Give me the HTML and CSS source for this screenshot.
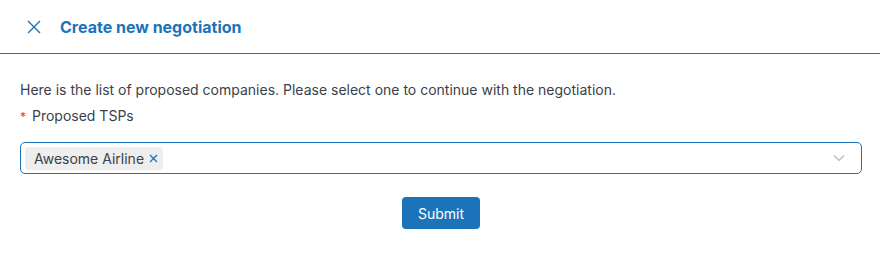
FILE: index.html
```html
<!DOCTYPE html>
<html>
<head>
<meta charset="utf-8">
<link rel="stylesheet" href="styles.css">
</head>
<body>
<div class="header">
  <svg class="close" width="14" height="14" viewBox="0 0 14 14"><path d="M1 1 L13 13 M13 1 L1 13" stroke="#1b74ba" stroke-width="1.4" fill="none"/></svg>
  <h1 class="title">Create new negotiation</h1>
</div>
<div class="content">
  <p class="desc">Here is the list of proposed companies. Please select one to continue with the negotiation.</p>
  <div class="label"><span class="req">*</span> Proposed TSPs</div>
  <div class="select">
    <span class="tag">Awesome Airline <svg class="tag-x" width="9" height="9" viewBox="0 0 9 9"><path d="M1 1 L8 8 M8 1 L1 8" stroke="#1b74ba" stroke-width="1.3" fill="none"/></svg></span>
    <svg class="chev" width="12" height="8" viewBox="0 0 12 8"><path d="M1 1.5 L6 6.5 L11 1.5" stroke="#b9b4bb" stroke-width="1.2" fill="none"/></svg>
  </div>
  <div class="actions"><button class="submit">Submit</button></div>
</div>
</body>
</html>
```
FILE: styles.css
```css
* { box-sizing: border-box; }
body { margin: 0; font-family: Inter, "Noto Sans", sans-serif; color: #3b3f4a; background: #fff; }
.header { height: 54px; border-bottom: 1px solid #1b74ba; display: flex; align-items: center; padding-left: 27px; }
.close { display: block; margin-right: 19px; }
.title { margin: 0; font-size: 16px; font-weight: 700; color: #1b74ba; line-height: 20px; }
.content { padding: 26px 18px 0 20px; }
.desc { margin: 0; font-size: 14px; line-height: 20px; }
.label { margin-top: 6px; font-size: 14px; line-height: 20px; }
.req { color: #d9363e; font-size: 12px; margin-right: 2px; }
.select { margin-top: 15px; height: 32px; border: 1px solid #1b74ba; border-radius: 5px; display: flex; align-items: center; padding: 0 16px 0 4px; justify-content: space-between; }
.tag { background: #eeeeef; border-radius: 4px; height: 23px; display: inline-flex; align-items: center; padding: 0 5px 0 9px; font-size: 14px; color: #3b3f4a; }
.tag-x { margin-left: 5px; display: block; }
.chev { display: block; }
.actions { display: flex; justify-content: center; margin-top: 23px; }
.submit { background: #1b74ba; color: #fff; border: none; border-radius: 4px; height: 32px; width: 78px; font-family: Inter, sans-serif; font-size: 14px; padding: 0; }
```
